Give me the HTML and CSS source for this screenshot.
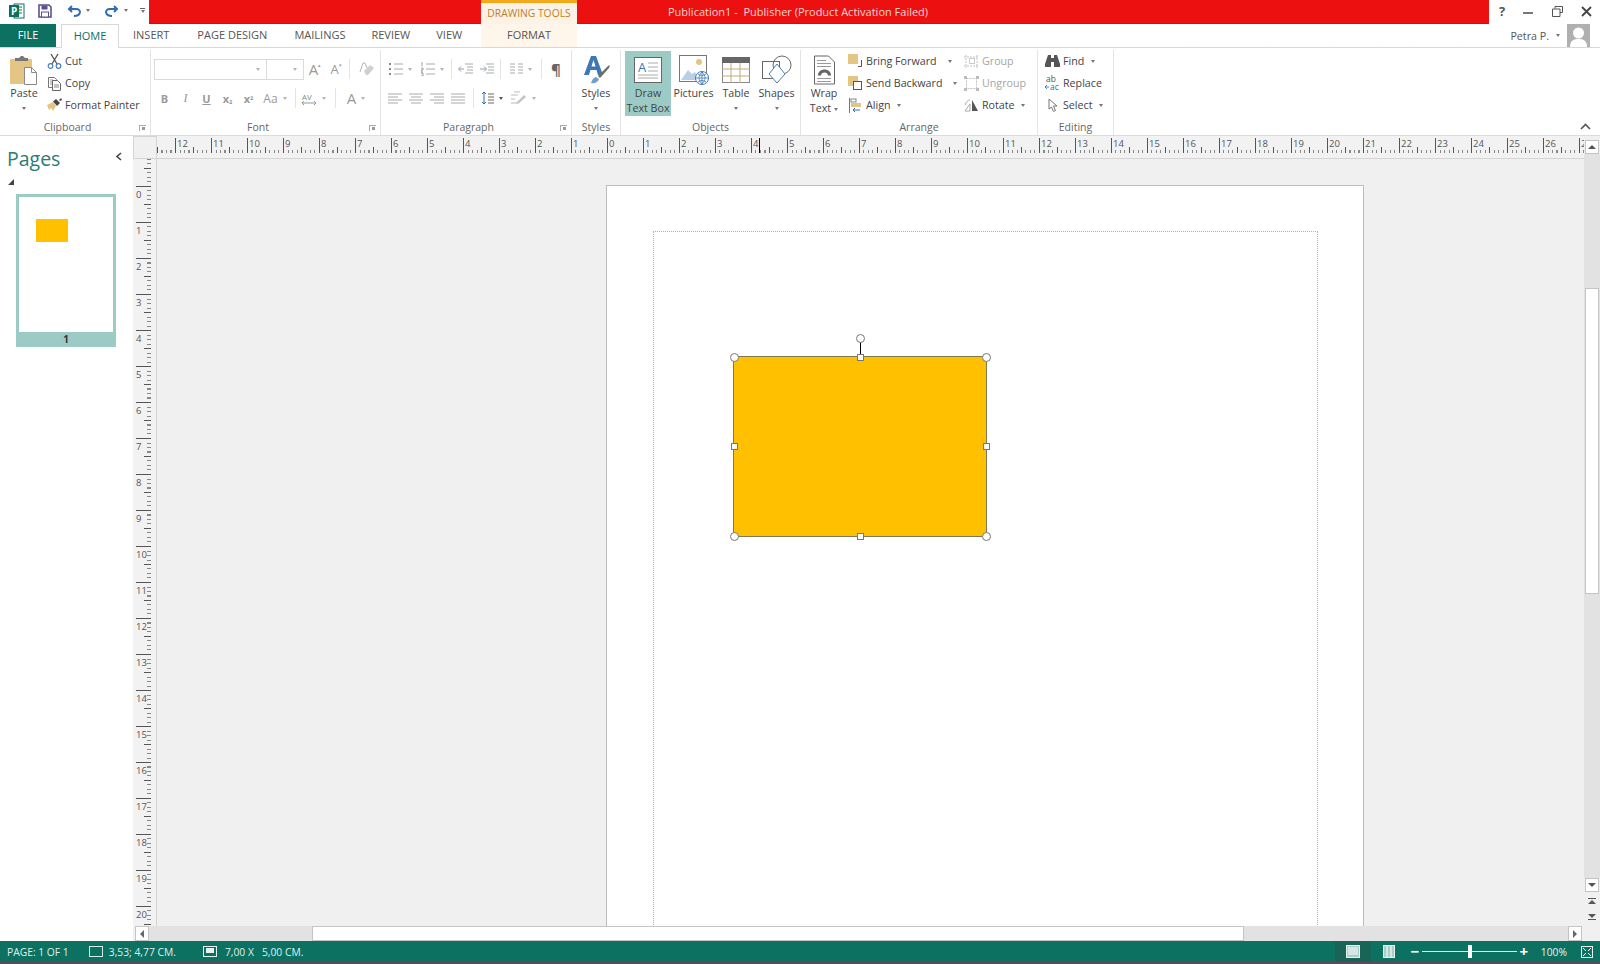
FILE: index.html
```html
<!DOCTYPE html>
<html lang="en">
<head>
    <meta charset="UTF-8">
    <title>Publication1 - Publisher</title>
    <link rel="stylesheet" href="styles.css">
</head>
<body>
<div class="window">
    <div class="titlebar">
        <div class="qat">
            <svg class="qat-logo" width="16" height="16" viewBox="0 0 16 16"><rect x="5" y="1" width="10" height="14" fill="#fff" stroke="#0e6f5f"/><path d="M10 4h3M10 7h3M10 10h3" stroke="#0e6f5f"/><rect x="0" y="2" width="10" height="12" fill="#0e6f5f"/><text x="2" y="12" class="logo-letter">P</text></svg>
            <svg class="qat-save" width="14" height="14" viewBox="0 0 14 14"><path d="M1 1h10l2 2v10H1z" fill="#fff" stroke="#5f4f8f" stroke-width="1.6"/><rect x="3.5" y="1.5" width="6" height="4" fill="#5f4f8f"/><rect x="3.5" y="8" width="7" height="5" fill="#fff" stroke="#5f4f8f"/></svg>
            <svg class="qat-undo" width="14" height="12" viewBox="0 0 14 12"><path d="M7 11c7 0 8-7 2-7H2M5 1 2 4l3 3" fill="none" stroke="#2f6db0" stroke-width="2"/></svg>
            <span class="caret qat-caret"></span>
            <svg class="qat-redo" width="14" height="12" viewBox="0 0 14 12"><path d="M7 11C0 11-1 4 5 4h7M9 1l3 3-3 3" fill="none" stroke="#2f6db0" stroke-width="2"/></svg>
            <span class="caret qat-caret"></span>
            <span class="qat-more"><i></i><span class="caret"></span></span>
        </div>
        <div class="title-red">
            <div class="context-head">DRAWING TOOLS</div>
            <div class="title-text">Publication1 -&nbsp; Publisher (Product Activation Failed)</div>
        </div>
        <div class="win-controls">
            <span class="win-help">?</span>
            <svg width="10" height="10" viewBox="0 0 10 10"><path d="M0 7h10" stroke="#555" stroke-width="1.6"/></svg>
            <svg width="11" height="11" viewBox="0 0 11 11"><path d="M3 2.500V.5h7.500v6H8M.5 3h7.500v7.500H.5z" fill="none" stroke="#555"/></svg>
            <svg width="11" height="11" viewBox="0 0 11 11"><path d="M1 1l9 9M10 1l-9 9" stroke="#444" stroke-width="1.8"/></svg>
        </div>
    </div>

    <div class="tabrow">
        <svg class="doodles" width="470" height="48" viewBox="0 0 470 48"><g fill="none" stroke="#e6e6e6" stroke-width="1.200"><path d="M45 47 60 24M52 47 67 24M132 35l40 12M140 24l-8 11M172 47l6-12M200 24l-10 23M215 28l8 19M250 24l24 20h12M278 44l8-20M312 44l16-20M310 47l5-3-1-6M345 30c5-3 8 2 6 5l6 10c2 4-4 6-6 2l-8-12M405 24l14 23M450 0l-14 24M490 0l-20 47"/></g></svg>
        <div class="tabs">
            <a class="tab tab-file">FILE</a>
            <a class="tab tab-home">HOME</a>
            <a class="tab">INSERT</a>
            <a class="tab">PAGE DESIGN</a>
            <a class="tab tab-mail">MAILINGS</a>
            <a class="tab">REVIEW</a>
            <a class="tab tab-view">VIEW</a>
        </div>
        <a class="tab tab-format">FORMAT</a>
        <div class="account">
            <span>Petra P.</span>
            <span class="caret"></span>
            <svg class="avatar" width="23" height="23" viewBox="0 0 23 23"><rect width="23" height="23" fill="#b0b0b0"/><circle cx="11.500" cy="9" r="5.500" fill="#fff"/><path d="M3 23c0-7 4-8 8.500-8s8.500 1 8.500 8z" fill="#fff"/></svg>
        </div>
    </div>

    <div class="ribbon">
        <section class="group g-clipboard">
            <div class="group-body">
                <div class="big big-paste">
                    <svg class="big-icon" width="28" height="30" viewBox="0 0 28 30"><rect x="0" y="4" width="22" height="25" rx="1" fill="#e4c583"/><path d="M5 6V3h4l2-2h2l2 2h3v3z" fill="#777"/><path d="M14.500 12.500h7l5 5v12h-12z" fill="#fff" stroke="#8a8a8a"/><path d="M21.500 12.500v5h5" fill="none" stroke="#8a8a8a"/></svg>
                    <span>Paste</span>
                    <span class="caret"></span>
                </div>
                <div class="small-list">
                    <div class="small"><svg width="15" height="15" viewBox="0 0 15 15"><path d="M4 0l6 10M11 0 5 10" stroke="#555" stroke-width="1.300"/><circle cx="3.500" cy="12" r="2.300" fill="none" stroke="#4c80b0" stroke-width="1.200"/><circle cx="11.500" cy="12" r="2.300" fill="none" stroke="#4c80b0" stroke-width="1.200"/></svg>Cut</div>
                    <div class="small"><svg width="15" height="15" viewBox="0 0 15 15"><path d="M1.500 1.500h6l2 2v8h-8z" fill="#fff" stroke="#777"/><path d="M3 4h3M3 6h3M3 8h3" stroke="#999"/><path d="M5.500 4.500h5l3 3v7h-8z" fill="#fff" stroke="#666"/><path d="M7 9h5M7 11h5" stroke="#888"/></svg>Copy</div>
                    <div class="small"><svg width="15" height="14" viewBox="0 0 15 14"><path d="M0 7l6-3 3 4-3 5-2-3-2 2z" fill="#e4c583"/><path d="M6 3.500 9 1l4 4-3 3z" fill="#444"/><path d="M12 2l2-2 1 2-2 1z" fill="#444"/></svg>Format Painter</div>
                </div>
            </div>
            <div class="group-label label-launch">Clipboard<span class="launcher"></span></div>
        </section>

        <section class="group g-font">
            <div class="group-body stack off">
                <div class="row row-top">
                    <span class="combo combo-name"><span class="caret"></span></span>
                    <span class="combo combo-size"><span class="caret"></span></span>
                    <span class="tool t22 glyph">A<sup>▴</sup></span>
                    <span class="tool t20 glyph small-a">A<sup>▾</sup></span>
                    <i class="sep"></i>
                    <span class="tool t22 tool-clear"><svg width="15" height="15" viewBox="0 0 15 15"><path d="M1 10 4 1h2l2 5" fill="none" stroke="#b5b5b5"/><path d="M5 9l6-6 4 3-6 7H7z" fill="#cfcfcf"/></svg></span>
                </div>
                <div class="row">
                    <span class="tool t21"><b>B</b></span>
                    <span class="tool t21"><em class="ital">I</em></span>
                    <span class="tool t21"><u>U</u></span>
                    <span class="tool t21"><b>x<small>₂</small></b></span>
                    <span class="tool t21"><b>x<small>²</small></b></span>
                    <span class="tool t32">Aa<span class="caret"></span></span>
                    <i class="sep sep-a"></i>
                    <span class="tool t34"><svg width="16" height="15" viewBox="0 0 16 15"><text x="1" y="9" class="av">AV</text><path d="M1 12h14M3 10l-2 2 2 2M13 10l2 2-2 2" fill="none" stroke="#999"/></svg><span class="caret"></span></span>
                    <i class="sep sep-b"></i>
                    <span class="tool t40 big-a">A<span class="caret"></span></span>
                </div>
            </div>
            <div class="group-label label-launch">Font<span class="launcher"></span></div>
        </section>

        <section class="group g-para">
            <div class="group-body stack off">
                <div class="row row-top">
                    <span class="tool t32"><svg width="14" height="14" viewBox="0 0 14 14"><path d="M5 2h9M5 7h9M5 12h9" stroke="#aaa"/><path d="M0 1h2v2H0zM0 6h2v2H0zM0 11h2v2H0z" fill="#888"/></svg><span class="caret"></span></span>
                    <span class="tool t32"><svg width="14" height="14" viewBox="0 0 14 14"><path d="M5 2h9M5 7h9M5 12h9" stroke="#aaa"/><path d="M1 0v4M0 6h2v2H0v2h2M0 11h2v3H0" fill="none" stroke="#888" stroke-width=".8"/></svg><span class="caret"></span></span>
                    <i class="sep"></i>
                    <span class="tool t21"><svg width="15" height="12" viewBox="0 0 15 12"><path d="M7 1h8M9 4h6M9 7h6M7 10h8" stroke="#aaa"/><path d="M6 6H1M3 3.500 .5 6 3 8.500" fill="none" stroke="#8aa0b5"/></svg></span>
                    <span class="tool t21"><svg width="15" height="12" viewBox="0 0 15 12"><path d="M7 1h8M9 4h6M9 7h6M7 10h8" stroke="#aaa"/><path d="M1 6h6M5 3.500 7.500 6 5 8.500" fill="none" stroke="#8aa0b5"/></svg></span>
                    <i class="sep"></i>
                    <span class="tool t34"><svg width="13" height="12" viewBox="0 0 13 12"><path d="M0 1h5M0 4h5M0 7h5M0 10h5M8 1h5M8 4h5M8 7h5M8 10h5" stroke="#aaa"/></svg><span class="caret"></span></span>
                    <i class="sep"></i>
                    <span class="tool t22 pilcrow">¶</span>
                </div>
                <div class="row">
                    <span class="tool t21"><svg width="14" height="11" viewBox="0 0 14 11"><path d="M0 1h14M0 4h10M0 7h14M0 10h10" stroke="#aaa"/></svg></span>
                    <span class="tool t21"><svg width="14" height="11" viewBox="0 0 14 11"><path d="M0 1h14M2 4h10M0 7h14M2 10h10" stroke="#aaa"/></svg></span>
                    <span class="tool t21"><svg width="14" height="11" viewBox="0 0 14 11"><path d="M0 1h14M4 4h10M0 7h14M4 10h10" stroke="#aaa"/></svg></span>
                    <span class="tool t21"><svg width="14" height="11" viewBox="0 0 14 11"><path d="M0 1h14M0 4h14M0 7h14M0 10h14" stroke="#aaa"/></svg></span>
                    <i class="sep sep-c"></i>
                    <span class="tool t36"><svg width="13" height="14" viewBox="0 0 13 14"><path d="M3 1v12" stroke="#2f6db0"/><path d="M1 3l2-2 2 2M1 11l2 2 2-2" fill="none" stroke="#2f6db0"/><path d="M7 3h6M7 6h6M7 9h6M7 12h6" stroke="#666"/></svg><span class="caret caret-dark"></span></span>
                    <span class="tool t26"><svg width="16" height="15" viewBox="0 0 16 15"><path d="M3 1h6M0 4h7M0 8h4M0 12h6" stroke="#bbb"/><path d="M5 12l8-8 2 2-8 7z" fill="#c3c3c3"/></svg><span class="caret"></span></span>
                </div>
            </div>
            <div class="group-label label-launch">Paragraph<span class="launcher"></span></div>
        </section>

        <section class="group g-styles">
            <div class="group-body">
                <div class="big big-styles">
                    <svg class="big-icon" width="29" height="30" viewBox="0 0 29 30"><path d="M2 20 9 1h5l7 19h-5l-1.500-5h-6L7 20zM9.500 11.500h4L11.500 5z" fill="#3e78b2" fill-rule="evenodd"/><path d="M9 28c1-1 1-5 5-6l3 2c-1 3-4 5-8 4z" fill="#6da0cc"/><path d="M16 21l10-10 2-1-1 3-9 10z" fill="#6e6e5e"/></svg>
                    <span>Styles</span>
                    <span class="caret"></span>
                </div>
            </div>
            <div class="group-label">Styles</div>
        </section>

        <section class="group g-objects">
            <div class="group-body">
                <div class="big big-draw active">
                    <svg class="big-icon" width="28" height="26" viewBox="0 0 28 26"><rect x=".5" y=".5" width="27" height="25" fill="#fff" stroke="#666"/><text x="4" y="15" class="icon-a">A</text><path d="M14 6h10M14 10h10M14 14h10M4 18h20M4 21h20" stroke="#aaa"/></svg>
                    <span>Draw</span>
                    <span>Text Box</span>
                </div>
                <div class="big big-pictures">
                    <svg class="big-icon" width="30" height="30" viewBox="0 0 30 30"><rect x=".5" y=".5" width="27" height="26" fill="#fff" stroke="#777"/><circle cx="20" cy="7" r="3" fill="#e4c583"/><path d="M2 25l7-10 4 4 3-2 5 8z" fill="#b9cfe3"/><circle cx="23" cy="23" r="6.500" fill="#fff" stroke="#3e78b2"/><path d="M17 23h12M23 17v12M19 19c3 2 5 2 8 0M19 27c3-2 5-2 8 0M23 17c-4 4-4 8 0 12M23 17c4 4 4 8 0 12" fill="none" stroke="#3e78b2" stroke-width=".8"/></svg>
                    <span>Pictures</span>
                </div>
                <div class="big big-table">
                    <svg class="big-icon" width="28" height="26" viewBox="0 0 28 26"><rect x=".5" y=".5" width="27" height="25" fill="#fff" stroke="#888"/><rect width="28" height="6" fill="#666"/><path d="M0 12h28M0 19h28M9 6v20M18 6v20" stroke="#c4a97a"/></svg>
                    <span>Table</span>
                    <span class="caret"></span>
                </div>
                <div class="big big-shapes">
                    <svg class="big-icon" width="30" height="30" viewBox="0 0 30 30"><rect x=".5" y="6.500" width="17" height="17" fill="#fff" stroke="#666"/><circle cx="20" cy="10" r="9" fill="none" stroke="#666"/><path d="M15 9l8 10-8 9-8-9z" fill="#fff" stroke="#4c80b0"/></svg>
                    <span>Shapes</span>
                    <span class="caret"></span>
                </div>
            </div>
            <div class="group-label">Objects</div>
        </section>

        <section class="group g-arrange">
            <div class="group-body">
                <div class="big big-wrap">
                    <svg class="big-icon" width="21" height="29" viewBox="0 0 21 29"><path d="M.5.500h14l6 6v22H.5z" fill="#fff" stroke="#666"/><path d="M3 5h9M3 8h14M3 11h14M3 23h14M3 26h14" stroke="#999"/><path d="M4 20c0-8 13-8 13 0h-3c0-4-7-4-7 0z" fill="#666"/></svg>
                    <span>Wrap</span>
                    <span>Text<span class="caret caret-in"></span></span>
                </div>
                <div class="small-list list-order">
                    <div class="small"><svg width="15" height="15" viewBox="0 0 15 15"><rect width="10" height="10" fill="#e4c583"/><path d="M10 12.500h3.500V6" fill="none" stroke="#555"/></svg>Bring Forward<span class="caret caret-gap"></span></div>
                    <div class="small"><svg width="15" height="15" viewBox="0 0 15 15"><rect width="10" height="10" fill="#e4c583"/><rect x="5.500" y="5.500" width="8" height="8" fill="#fff" stroke="#555"/></svg>Send Backward<span class="caret caret-gap"></span></div>
                    <div class="small"><svg width="15" height="15" viewBox="0 0 15 15"><path d="M1.500 0v15" stroke="#777"/><rect x="3" y="1" width="5" height="3" fill="none" stroke="#888"/><rect x="3" y="5" width="10" height="4" fill="#e4c583"/><path d="M12 12H5M7 10l-2 2 2 2" fill="none" stroke="#2f6db0"/></svg>Align<span class="caret caret-in"></span></div>
                </div>
                <div class="small-list list-group">
                    <div class="small off"><svg width="15" height="15" viewBox="0 0 15 15"><path d="M2 1v13M13 1v13M0 3h15M0 12h15" stroke="#c2c2c2" stroke-dasharray="2 1"/><rect x="5.500" y="4.500" width="5" height="5" fill="none" stroke="#ccc"/></svg>Group</div>
                    <div class="small off"><svg width="15" height="15" viewBox="0 0 15 15"><rect x="2.500" y="2.500" width="10" height="10" fill="none" stroke="#c2c2c2" stroke-dasharray="2 1"/><path d="M0 0h3v3H0zM12 0h3v3h-3zM0 12h3v3H0zM12 12h3v3h-3z" fill="#bbb"/></svg>Ungroup</div>
                    <div class="small"><svg width="15" height="14" viewBox="0 0 15 14"><path d="M1 13 6 6v7z" fill="none" stroke="#aaa"/><path d="M8 2l6 11H8z" fill="#555"/><path d="M1 7c1-3 3-5 5-5" fill="none" stroke="#aaa"/></svg>Rotate<span class="caret caret-in"></span></div>
                </div>
            </div>
            <div class="group-label">Arrange</div>
        </section>

        <section class="group g-editing">
            <div class="group-body">
                <div class="small-list">
                    <div class="small"><svg width="15" height="14" viewBox="0 0 15 14"><path d="M3 1h3v3h3V1h3l3 9v3H9V8H6v5H0v-3z" fill="#555"/></svg>Find<span class="caret caret-find"></span></div>
                    <div class="small"><svg width="15" height="16" viewBox="0 0 15 16"><text x="1" y="7" class="rep">ab</text><text x="5" y="15" class="rep rep-blue">ac</text><path d="M4 12H0M2 10l-2 2 2 2" fill="none" stroke="#2f6db0" stroke-width=".8"/></svg>Replace</div>
                    <div class="small"><svg width="15" height="15" viewBox="0 0 15 15"><path d="M4 1v10l2.500-2 2 4.500 2-1-2-4.500H12z" fill="#fff" stroke="#777"/></svg>Select<span class="caret caret-in"></span></div>
                </div>
            </div>
            <div class="group-label">Editing</div>
        </section>

        <svg class="collapse" width="11" height="7" viewBox="0 0 11 7"><path d="M1 6l4.500-4.500L10 6" fill="none" stroke="#555" stroke-width="1.600"/></svg>
    </div>

    <div class="main">
        <aside class="pane">
            <div class="pane-head">
                <h2>Pages</h2>
                <svg width="7" height="9" viewBox="0 0 7 9"><path d="M6 1 2 4.500 6 8" fill="none" stroke="#444" stroke-width="1.600"/></svg>
            </div>
            <i class="pane-tri"></i>
            <div class="thumb">
                <div class="thumb-page"><div class="thumb-shape"></div></div>
                <div class="thumb-num">1</div>
            </div>
        </aside>

        <div class="work">
            <div class="ruler-corner"></div>
            <div class="ruler-h" id="rulerH"><i class="ruler-mark"></i></div>
            <div class="vscroll">
                <span class="sb-btn"><span class="caret caret-up"></span></span>
                <div class="vtrack"><div class="vthumb"></div></div>
                <span class="sb-btn"><span class="caret caret-down"></span></span>
                <span class="vstep"><i></i><span class="caret caret-up"></span></span>
                <span class="vstep vstep-last"><span class="caret caret-down"></span><i></i></span>
            </div>
            <div class="ruler-v" id="rulerV"></div>
            <div class="canvas">
                <div class="page">
                    <div class="guides">
                        <div class="shape">
                            <i class="stem"></i>
                            <i class="h round rot"></i>
                            <i class="h round tl"></i><i class="h tc"></i><i class="h round tr"></i>
                            <i class="h ml"></i><i class="h mr"></i>
                            <i class="h round bl"></i><i class="h bc"></i><i class="h round br"></i>
                        </div>
                    </div>
                </div>
            </div>
            <div class="hscroll">
                <span class="sb-btn"><span class="caret caret-left"></span></span>
                <div class="htrack"><div class="hthumb"></div></div>
                <span class="sb-btn"><span class="caret caret-right"></span></span>
            </div>
        </div>
    </div>

    <footer class="status">
        <span class="st-page">PAGE: 1 OF 1</span>
        <svg class="st-ico1" width="14" height="11" viewBox="0 0 14 11"><rect x=".5" y=".5" width="13" height="10" fill="none" stroke="#d5ebe6"/></svg>
        <span class="st-pos">3,53; 4,77 CM.</span>
        <svg class="st-ico2" width="14" height="11" viewBox="0 0 14 11"><rect x=".5" y=".5" width="13" height="10" fill="none" stroke="#e6f2ef"/><rect x="3" y="2" width="8" height="5" fill="#e6f2ef"/></svg>
        <span class="st-size">7,00 X&nbsp;&nbsp; 5,00 CM.</span>
        <div class="st-right">
            <span class="view view-on"><svg width="14" height="13" viewBox="0 0 14 13"><rect x=".5" y=".5" width="13" height="12" fill="#a8cfc8" stroke="#e6f2ef"/><path d="M2 3h10M2 5h10M2 7h10M2 9h10" stroke="#fff"/></svg></span>
            <span class="view"><svg width="12" height="13" viewBox="0 0 12 13"><rect x=".5" y=".5" width="11" height="12" fill="#a8cfc8" stroke="#e6f2ef"/><path d="M4 1v11M8 1v11" stroke="#fff"/></svg></span>
            <span class="zoom-sign zoom-minus">−</span>
            <div class="slider"><i></i></div>
            <span class="zoom-sign zoom-plus">+</span>
            <span class="zoom-val">100%</span>
            <svg width="12" height="12" viewBox="0 0 12 12"><rect x=".5" y=".5" width="11" height="11" fill="none" stroke="#e6f2ef"/><path d="M2 2l3 3M10 2 7 5M2 10l3-3M10 10 7 7" stroke="#fff"/></svg>
        </div>
    </footer>
</div>
<script src="rulers.js"></script>
</body>
</html>
```

FILE: styles.css
```css
* {
    box-sizing: border-box;
}
html, body {
    margin: 0;
    height: 100%;
    overflow: hidden;
}
body {
    background: #5b4a5c;
    font-family: "Open Sans", "Noto Sans", sans-serif;
    font-size: 10.700px;
    color: #444;
}
.window {
    width: 1600px;
    height: 964px;
    display: flex;
    flex-direction: column;
    background: #fff;
    border-bottom: 2px solid #5b4a5c;
}
.caret {
    display: inline-block;
    width: 0;
    height: 0;
    flex: none;
    border-top: 3px solid #777;
    border-left: 2.500px solid transparent;
    border-right: 2.500px solid transparent;
}
.off .caret {
    border-top-color: #b5b5b5;
}
.off .caret-dark {
    border-top-color: #555;
}
.caret-up {
    border-top: 0;
    border-bottom: 4px solid #555;
    border-left-width: 4px;
    border-right-width: 4px;
}
.caret-down {
    border-top: 4px solid #555;
    border-left-width: 4px;
    border-right-width: 4px;
}
.caret-left {
    border: 0;
    border-top: 4px solid transparent;
    border-bottom: 4px solid transparent;
    border-right: 4px solid #666;
}
.caret-right {
    border: 0;
    border-top: 4px solid transparent;
    border-bottom: 4px solid transparent;
    border-left: 4px solid #666;
}
.caret-in {
    margin-left: 3px;
    vertical-align: middle;
}

/* title bar */
.titlebar {
    display: flex;
    height: 24px;
    flex: none;
}
.qat {
    width: 149px;
    display: flex;
    align-items: center;
    padding: 0 0 3px 9px;
}
.logo-letter {
    font: bold 10px "Open Sans", sans-serif;
    fill: #fff;
}
.qat-save {
    margin-left: 13px;
}
.qat-undo {
    margin-left: 15px;
}
.qat-redo {
    margin-left: 15px;
}
.qat-caret {
    margin-left: 5px;
}
.qat-more {
    margin-left: 12px;
    display: flex;
    flex-direction: column;
    align-items: center;
    gap: 1px;
}
.qat-more i {
    width: 5px;
    height: 1px;
    background: #666;
}
.title-red {
    width: 1340px;
    display: flex;
    background: #ec1010;
    border-bottom: 1px solid #b81818;
    color: #fbd5d2;
    padding-left: 332px;
}
.context-head {
    width: 96px;
    height: 24px;
    background: #fdf3e4;
    border-top: 3px solid #f5a81c;
    color: #bf7d2c;
    font-size: 10.300px;
    text-align: center;
    line-height: 20px;
}
.title-text {
    margin-left: 91px;
    line-height: 23px;
    font-size: 11px;
}
.win-controls {
    flex: 1;
    display: flex;
    align-items: center;
    justify-content: space-between;
    padding: 0 8px 2px 10px;
}
.win-help {
    font-weight: 700;
    font-size: 13px;
    color: #555;
}

/* tabs */
.tabrow {
    position: relative;
    display: flex;
    height: 24px;
    flex: none;
    border-bottom: 1px solid #d8d8d8;
}
.doodles {
    position: absolute;
    right: 0;
    top: 0;
}
.tabs {
    width: 481px;
    flex: none;
    display: flex;
    position: relative;
}
.tab {
    display: block;
    flex: none;
    padding: 0 14px;
    line-height: 22px;
    font-size: 11px;
    color: #555;
    white-space: nowrap;
}
.tab-mail {
    padding: 0 12px 0 13px;
}
.tab-view {
    padding: 0 14px 0 12px;
}
.tab-file {
    width: 56px;
    padding: 0;
    margin-right: 5px;
    height: 23px;
    text-align: center;
    background: #0c7161;
    color: #fff;
}
.tab-home {
    width: 58px;
    padding: 0;
    height: 24px;
    text-align: center;
    color: #0c7161;
    background: #fff;
    border: 1px solid #d8d8d8;
    border-bottom: 0;
}
.tab-format {
    width: 96px;
    padding: 0;
    height: 23px;
    text-align: center;
    background: #fef6ea;
    position: relative;
}
.account {
    margin-left: auto;
    position: relative;
    display: flex;
    align-items: center;
    gap: 7px;
    padding-right: 10px;
    height: 23px;
    color: #555;
    font-size: 10.700px;
}

/* ribbon */
.ribbon {
    position: relative;
    display: flex;
    height: 88px;
    flex: none;
    padding-top: 2px;
    background: #fff;
    border-bottom: 1px solid #dcdcdc;
}
.group {
    display: flex;
    flex-direction: column;
    flex: none;
    border-right: 1px solid #e4e4e4;
}
.g-clipboard { width: 151px; }
.g-font { width: 230px; }
.g-para { width: 191px; }
.g-styles { width: 49px; }
.g-objects { width: 180px; }
.g-arrange { width: 237px; }
.g-editing { width: 76px; }
.group-body {
    flex: 1;
    display: flex;
}
.group-label {
    position: relative;
    height: 15px;
    text-align: center;
    line-height: 15px;
    color: #666;
    font-size: 10.500px;
}
.label-launch {
    padding-right: 15px;
}
.launcher {
    position: absolute;
    right: 4px;
    top: 5px;
    width: 7px;
    height: 6px;
    border-left: 1px solid #aaa;
    border-top: 1px solid #aaa;
}
.launcher::after {
    content: "";
    display: block;
    width: 3px;
    height: 3px;
    margin: 1px 0 0 2px;
    background: #999;
}
.big {
    display: flex;
    flex-direction: column;
    align-items: center;
    flex: none;
    height: 65px;
    margin-top: 1px;
    padding-top: 4px;
    line-height: 15px;
    white-space: nowrap;
}
.big-icon {
    height: 30px;
    margin-bottom: 1px;
    flex: none;
}
.big .caret {
    margin-top: 6px;
}
.big .caret-in {
    margin-top: 0;
}
.big-paste { width: 36px; margin-left: 6px; }
.big-styles { width: 48px; }
.big-draw { width: 46px; margin-left: 4px; }
.big-pictures { width: 45px; }
.big-table { width: 40px; }
.big-shapes { width: 41px; }
.big-wrap { width: 32px; margin-left: 7px; }
.active {
    background: #9ccbc5;
}
.small-list {
    display: flex;
    flex-direction: column;
    white-space: nowrap;
}
.small {
    display: flex;
    align-items: center;
    height: 22px;
    gap: 3px;
}
.small svg {
    flex: none;
}
.small.off {
    color: #a5a5a5;
}
.g-clipboard .small-list {
    margin-left: 5px;
}
.list-order {
    margin-left: 8px;
    width: 116px;
}
.list-group {
    flex: 1;
}
.g-editing .small-list {
    margin-left: 7px;
}
.caret-gap {
    margin-left: 8px;
}
.caret-find {
    margin-left: 4px;
}
.collapse {
    position: absolute;
    right: 9px;
    bottom: 5px;
}
.stack {
    flex-direction: column;
    padding-left: 3px;
}
.off {
    color: #9a9a9a;
}
.row {
    display: flex;
    align-items: center;
    height: 22px;
}
.row-top {
    margin: 8px 0 7px;
}
.tool {
    display: flex;
    align-items: center;
    justify-content: center;
    gap: 5px;
    height: 22px;
    flex: none;
    font-size: 12px;
}
.t20 { width: 20px; }
.t21 { width: 21px; }
.t22 { width: 22px; }
.t26 { width: 26px; }
.t32 { width: 32px; }
.t34 { width: 34px; }
.t36 { width: 36px; }
.t40 { width: 40px; }
.tool-clear {
    margin-left: 2px;
}
.tool b, .tool u {
    font-weight: 700;
    font-size: 11px;
}
.tool small {
    font-size: 8px;
}
.ital {
    font-family: "Liberation Serif", serif;
    font-size: 12px;
}
.glyph {
    font-size: 15px;
    gap: 0;
}
.small-a {
    font-size: 13px;
}
.glyph sup {
    font-size: 5px;
    line-height: 0;
    margin-top: -8px;
}
.big-a {
    font-size: 15px;
}
.pilcrow {
    font-size: 15px;
    font-weight: 700;
    color: #666;
}
.sep {
    width: 1px;
    height: 20px;
    margin: 0 3px;
    background: #e4e4e4;
    flex: none;
}
.sep-a {
    margin: 0 0 0 4px;
}
.sep-b {
    margin: 0 0 0 5px;
}
.sep-c {
    margin: 0 0 0 5px;
}
.combo {
    display: flex;
    align-items: center;
    justify-content: flex-end;
    height: 21px;
    padding-right: 6px;
    border: 1px solid #dadada;
    background: #fff;
}
.combo-name { width: 113px; flex: none; }
.combo-size { width: 38px; flex: none; margin-left: -1px; }
.av {
    font: 8px "Open Sans", sans-serif;
    fill: #888;
}
.rep {
    font: 8.500px "Open Sans", sans-serif;
    fill: #555;
}
.rep-blue {
    fill: #2f6db0;
}
.icon-a {
    font: 13px "Open Sans", sans-serif;
    fill: #3e78b2;
}

/* main area */
.main {
    flex: 1;
    display: flex;
    min-height: 0;
}
.pane {
    width: 133px;
    flex: none;
    padding: 10px 0 0 7px;
}
.pane-head {
    display: flex;
    align-items: center;
    justify-content: space-between;
    padding-right: 11px;
}
.pane-head svg {
    margin-top: -5px;
}
.pane-head h2 {
    margin: 0;
    font-size: 19.500px;
    font-weight: 400;
    color: #2b7c72;
    line-height: 26px;
}
.pane-tri {
    display: block;
    width: 0;
    height: 0;
    margin: 7px 0 0 1px;
    border-left: 6px solid transparent;
    border-bottom: 6px solid #444;
}
.thumb {
    width: 100px;
    height: 153px;
    margin: 9px 0 0 9px;
    display: flex;
    flex-direction: column;
    background: #9ccbc5;
    padding: 3px 3px 0;
}
.thumb-page {
    height: 135px;
    background: #fff;
    padding: 22px 0 0 17px;
}
.thumb-shape {
    width: 32px;
    height: 23px;
    background: #ffc000;
}
.thumb-num {
    flex: 1;
    text-align: center;
    font-weight: 700;
    font-size: 10px;
    line-height: 15px;
    color: #333;
}
.work {
    flex: 1;
    min-width: 0;
    display: grid;
    grid-template-columns: 24px 1fr 16px;
    grid-template-rows: 23px 1fr 15px;
}
.ruler-corner {
    background: #f0f0f0;
    border: 1px solid #d4d4d4;
}
.ruler-h {
    position: relative;
    display: flex;
    overflow: hidden;
    background: #f2f2f2;
    border-bottom: 1px solid #d4d4d4;
    font-size: 9.500px;
    color: #555;
}
.ruler-mark {
    position: absolute;
    left: 602px;
    top: 2px;
    width: 1px;
    height: 15px;
    background: #000;
}
.rh-cell {
    width: 36px;
    flex: none;
    padding: 1px 0 0 2px;
    line-height: 13px;
    background:
        linear-gradient(#555, #555) 0 2px / 1px 15px no-repeat,
        linear-gradient(#555, #555) 18px 11px / 1px 6px no-repeat,
        repeating-linear-gradient(90deg, #888 0, #888 1px, transparent 1px, transparent 4.500px) 0 14px / 100% 3px no-repeat;
}
.rh-cell:first-of-type {
    margin-left: -18px;
}
.ruler-v {
    overflow: hidden;
    background: #f2f2f2;
    border-right: 1px solid #d4d4d4;
    font-size: 9.500px;
    color: #555;
}
.rv-cell {
    height: 36px;
    padding: 2px 0 0 3px;
    line-height: 13px;
    background:
        linear-gradient(#555, #555) 3px 0 / 15px 1px no-repeat,
        linear-gradient(#555, #555) 11px 18px / 7px 1px no-repeat,
        repeating-linear-gradient(180deg, #888 0, #888 1px, transparent 1px, transparent 4.500px) 14px 0 / 4px 100% no-repeat;
}
.rv-cell:first-child {
    margin-top: -9px;
}
.canvas {
    min-width: 0;
    min-height: 0;
    overflow: hidden;
    background: #f0f0f0;
    padding: 26px 0 0 449px;
}
.page {
    width: 758px;
    height: 900px;
    background: #fff;
    border: 1px solid #bdbdbd;
    padding: 45px 45px 0 46px;
}
.guides {
    position: relative;
    height: 800px;
    border: 1px dotted #8fc0c0;
}
.shape {
    position: absolute;
    left: 79px;
    top: 124px;
    width: 254px;
    height: 181px;
    background: #ffc000;
    border: 1px solid #7f7a55;
}
.h {
    position: absolute;
    width: 7px;
    height: 7px;
    margin: -3.500px 0 0 -3.500px;
    background: #fff;
    border: 1px solid #777;
}
.round {
    width: 9px;
    height: 9px;
    margin: -4.500px 0 0 -4.500px;
    border-radius: 50%;
}
.tl { left: 0; top: 0; }
.tc { left: 50%; top: 0; }
.tr { left: 100%; top: 0; }
.ml { left: 0; top: 50%; }
.mr { left: 100%; top: 50%; }
.bl { left: 0; top: 100%; }
.bc { left: 50%; top: 100%; }
.br { left: 100%; top: 100%; }
.rot { left: 50%; top: -19px; }
.stem {
    position: absolute;
    left: 50%;
    top: -15px;
    width: 1px;
    height: 13px;
    background: #000;
}

/* scrollbars */
.vscroll {
    grid-column: 3;
    grid-row: 1 / 3;
    display: flex;
    flex-direction: column;
    align-items: center;
    padding: 4px 0 0;
    background: #f0f0f0;
}
.sb-btn {
    display: flex;
    align-items: center;
    justify-content: center;
    width: 14px;
    height: 14px;
    flex: none;
    background: #fff;
    border: 1px solid #c4c4c4;
}
.vtrack {
    width: 16px;
    height: 724px;
    flex: none;
    background: #e2e2e2;
    padding-top: 134px;
}
.vthumb {
    width: 14px;
    margin-left: 1px;
    height: 306px;
    background: #fff;
    border: 1px solid #c4c4c4;
}
.vstep {
    display: flex;
    flex-direction: column;
    align-items: center;
    gap: 1px;
    margin-top: 6px;
}
.vstep-last {
    margin-top: 10px;
}
.vstep i {
    width: 8px;
    height: 1px;
    background: #555;
}
.hscroll {
    grid-column: 1 / 4;
    grid-row: 3;
    display: flex;
    padding: 0 18px 0 2px;
    background: #f0f0f0;
}
.hscroll .sb-btn {
    height: 15px;
}
.htrack {
    flex: 1;
    background: #e2e2e2;
    padding-left: 163px;
}
.hthumb {
    width: 932px;
    height: 15px;
    background: #fff;
    border: 1px solid #c4c4c4;
}

/* status bar */
.status {
    display: flex;
    align-items: center;
    height: 21px;
    flex: none;
    padding: 0 7px;
    background: #0c7161;
    color: #dff0ec;
    font-size: 10.300px;
    white-space: nowrap;
}
.st-ico1 {
    margin-left: 20px;
}
.st-pos {
    margin-left: 6px;
}
.st-ico2 {
    margin-left: 27px;
}
.st-size {
    margin-left: 8px;
}
.st-right {
    margin-left: auto;
    display: flex;
    align-items: center;
    height: 100%;
}
.view {
    display: flex;
    align-items: center;
    justify-content: center;
    width: 36px;
    height: 100%;
}
.view-on {
    background: #1a6357;
}
.zoom-sign {
    font-size: 15px;
    font-weight: 700;
    color: #fff;
    width: 10px;
    text-align: center;
    line-height: 1;
}
.zoom-minus {
    margin-left: 3px;
}
.zoom-plus {
    margin-left: 2px;
}
.slider {
    position: relative;
    width: 95px;
    height: 1px;
    margin: 0 0 0 2px;
    background: #e6f2ef;
}
.slider i {
    position: absolute;
    left: 46px;
    top: -6px;
    width: 4px;
    height: 13px;
    background: #fff;
}
.zoom-val {
    margin: 0 14px 0 12px;
    color: #e6f2ef;
}
```

FILE: rulers.js
```js
// ruler cells, 36px per cm, numbers run outward from the page corner
const rulerH = document.getElementById('rulerH');
const rulerV = document.getElementById('rulerV');

function addCell(parent, cls, text) {
    const div = document.createElement('div');
    div.className = cls;
    div.textContent = text;
    parent.appendChild(div);
}

addCell(rulerH, 'rh-cell', '');
for (let n = 12; n > 0; n--) {
    addCell(rulerH, 'rh-cell', n);
}
for (let n = 0; n <= 27; n++) {
    addCell(rulerH, 'rh-cell', n);
}

addCell(rulerV, 'rv-cell', '');
for (let n = 0; n <= 20; n++) {
    addCell(rulerV, 'rv-cell', n);
}
```
